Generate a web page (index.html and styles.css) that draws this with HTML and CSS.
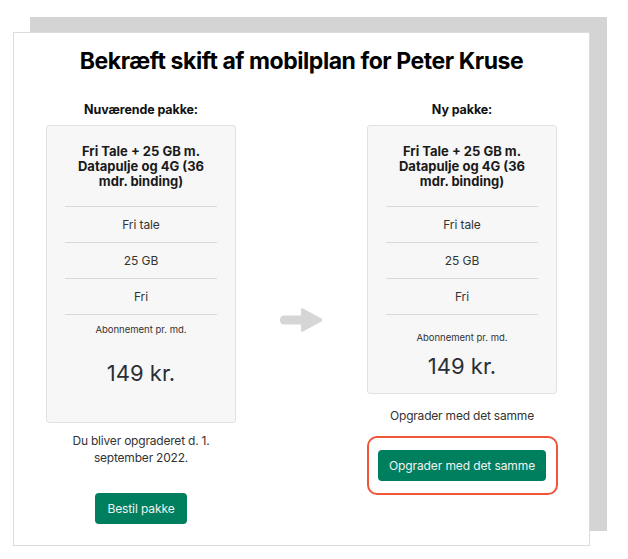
FILE: index.html
```html
<!DOCTYPE html>
<html lang="da">
<head>
<meta charset="utf-8">
<title>Bekræft skift af mobilplan</title>
<link rel="stylesheet" href="styles.css">
</head>
<body>
<div class="sheet">
  <h1 class="title">Bekræft skift af mobilplan for Peter Kruse</h1>
  <div class="compare">
    <div class="col col-current">
      <h2 class="col-head">Nuværende pakke:</h2>
      <div class="plan plan-current">
        <div class="plan-name">Fri Tale + 25 GB m. Datapulje og 4G (36 mdr. binding)</div>
        <div class="plan-row">Fri tale</div>
        <div class="plan-row">25 GB</div>
        <div class="plan-row">Fri</div>
        <div class="plan-price">
          <div class="price-label">Abonnement pr. md.</div>
          <div class="price-value">149 kr.</div>
        </div>
      </div>
      <p class="note">Du bliver opgraderet d. 1. september 2022.</p>
      <button class="btn btn-order">Bestil pakke</button>
    </div>
    <div class="arrow">
      <svg width="44" height="30" viewBox="0 0 44 30" aria-hidden="true">
        <path d="M4 10.5 H21 V4.5 Q21 2 23 3.5 L41.5 13.5 Q43 15 41.5 16.5 L23 26.5 Q21 28 21 25.5 V19.5 H4 Q0 19.5 0 15 Q0 10.5 4 10.5 Z" fill="#d6d6d6"/>
      </svg>
    </div>
    <div class="col col-new">
      <h2 class="col-head">Ny pakke:</h2>
      <div class="plan plan-new">
        <div class="plan-name">Fri Tale + 25 GB m. Datapulje og 4G (36 mdr. binding)</div>
        <div class="plan-row">Fri tale</div>
        <div class="plan-row">25 GB</div>
        <div class="plan-row">Fri</div>
        <div class="plan-price">
          <div class="price-label">Abonnement pr. md.</div>
          <div class="price-value">149 kr.</div>
        </div>
      </div>
      <p class="note note-new">Opgrader med det samme</p>
      <div class="highlight">
        <button class="btn btn-upgrade">Opgrader med det samme</button>
      </div>
    </div>
  </div>
</div>
</body>
</html>
```

FILE: styles.css
```css
* { box-sizing: border-box; }
html, body { margin: 0; background: #ffffff; }
body {
  padding: 32px 0 0 13px;
  font-family: Inter, "Noto Sans", "Liberation Sans", sans-serif;
  color: #333;
}
.sheet {
  width: 577px;
  height: 514px;
  background: #fff;
  border: 1px solid #dcdcdc;
  box-shadow: 17px -15px 0 0 #d4d4d4;
  padding: 0 32px;
}
.title {
  margin: 13px 0 0;
  font-size: 23px;
  line-height: 30px;
  font-weight: 700;
  color: #000;
  text-align: center;
  letter-spacing: -0.45px;
}
.compare {
  display: flex;
  margin-top: 26px;
}
.col {
  width: 190px;
  display: flex;
  flex-direction: column;
  align-items: center;
}
.arrow {
  flex: 1;
  display: flex;
  justify-content: center;
  padding-top: 203px;
}
.col-head {
  margin: 0;
  font-size: 12.5px;
  line-height: 16px;
  font-weight: 700;
  color: #111;
  height: 23px;
  letter-spacing: -0.1px;
}
.plan {
  width: 190px;
  background: #f7f7f7;
  border: 1px solid #e1e1e1;
  border-radius: 3px;
  padding: 18px 18px 0;
  text-align: center;
}
.plan-current { height: 298px; }
.plan-new { height: 269px; }
.plan-name {
  font-size: 13px;
  line-height: 15px;
  font-weight: 700;
  color: #1a1a1a;
  padding: 0 4px 17px;
  border-bottom: 1px solid #d9d9d9;
}
.plan-row {
  font-size: 12px;
  line-height: 35px;
  color: #333;
  border-bottom: 1px solid #d9d9d9;
  letter-spacing: -0.1px;
}
.plan-price { padding-top: 8px; }
.plan-new .plan-price { padding-top: 16px; }
.price-label {
  font-size: 9.5px;
  line-height: 14px;
  color: #333;
}
.price-value {
  margin-top: 22px;
  font-size: 22px;
  line-height: 28px;
  color: #2a2f36;
}
.plan-new .price-value { margin-top: 7px; }
.note {
  margin: 9px 0 0;
  font-size: 12px;
  line-height: 17px;
  color: #333;
  text-align: center;
  width: 160px;
  letter-spacing: -0.2px;
}
.note-new { width: auto; margin-top: 13px; }
.btn {
  border: 0;
  border-radius: 4px;
  background: #007f5f;
  color: #f2f2f2;
  font-family: inherit;
  font-size: 12px;
  letter-spacing: -0.1px;
  line-height: 31px;
  padding: 0 13px;
}
.btn-order { margin-top: 27px; height: 31px; width: 92px; padding: 0; }
.highlight {
  margin-top: 12px;
  width: 191px;
  height: 59px;
  border: 2px solid #f0553a;
  border-radius: 10px;
  display: flex;
  justify-content: center;
  align-items: center;
}
.btn-upgrade { width: 168px; height: 31px; padding: 0; }
```
